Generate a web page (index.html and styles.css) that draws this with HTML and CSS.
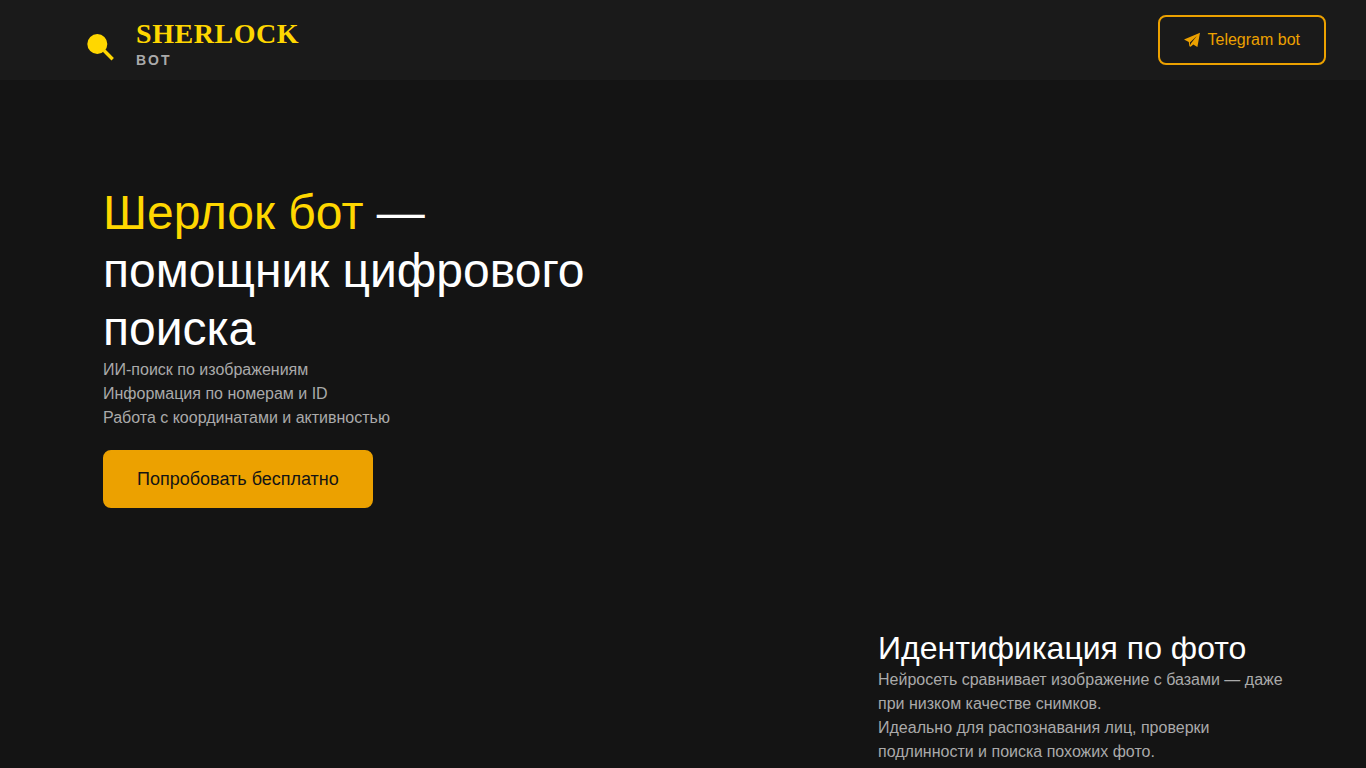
FILE: index.html
```html
<!DOCTYPE html>
<html lang="ru">
<head>
    <meta charset="UTF-8">
    <meta name="viewport" content="width=device-width, initial-scale=1.0">
    <title>Sherlock Bot</title>
    <link rel="stylesheet" href="styles.css">
</head>
<body>
    <header class="header">
        <a href="#" class="logo">
            <svg class="logo-icon" width="28" height="28" viewBox="0 0 28 28" aria-hidden="true">
                <circle cx="11.3" cy="11" r="10" fill="#ffd700"/>
                <path d="M18 17.5 L26.7 26.2" stroke="#ffd700" stroke-width="3.4"/>
            </svg>
            <span class="logo-text">
                <span class="logo-name">SHERLOCK</span>
                <span class="logo-sub">BOT</span>
            </span>
        </a>
        <a href="#" class="btn btn-outline">
            <svg width="16" height="16" viewBox="0 0 16 16" fill="currentColor" fill-rule="evenodd" aria-hidden="true">
                <path d="M0 7.4 L16 .8 L13.4 15 L9.3 12.4 L6.6 14.7 L5.4 14.3 L4.8 9.9 Z M5.9 10.4 L12.8 4 L7.1 11.3 L6.3 13.2 Z"/>
            </svg>
            Telegram bot
        </a>
    </header>

    <main>
        <section class="hero">
            <div class="hero-content">
                <h1><span class="accent">Шерлок бот</span> — помощник цифрового поиска</h1>
                <p>ИИ-поиск по изображениям<br>Информация по номерам и ID<br>Работа с координатами и активностью</p>
                <a href="#photo" class="btn btn-primary">Попробовать бесплатно</a>
            </div>
        </section>

        <section class="feature" id="photo">
            <div class="feature-text">
                <h2>Идентификация по фото</h2>
                <p>Нейросеть сравнивает изображение с базами — даже при низком качестве снимков.<br>Идеально для распознавания лиц, проверки подлинности и поиска похожих фото.</p>
            </div>
        </section>
    </main>
</body>
</html>
```
FILE: styles.css
```css
* {
    margin: 0;
    padding: 0;
    box-sizing: border-box;
}

body {
    font-family: "Liberation Sans", Arial, sans-serif;
    font-size: 16px;
    line-height: 24px;
    background-color: #141414;
    color: #aaa;
}

h1,
h2 {
    font-weight: 400;
    color: #fff;
}

h1 {
    font-size: 48px;
    line-height: 58px;
}

h2 {
    font-size: 32px;
    line-height: 40px;
}

.accent {
    color: #ffd700;
}

.header {
    display: flex;
    justify-content: space-between;
    align-items: center;
    height: 80px;
    padding: 0 40px 0 86px;
    background-color: #1a1a1a;
}

.logo {
    display: flex;
    align-items: center;
    gap: 22px;
    color: #aaa;
    text-decoration: none;
}

.logo-icon {
    margin-top: 14px;
}

.logo-text {
    display: flex;
    flex-direction: column;
    padding-top: 8px;
}

.logo-name {
    font-family: "Liberation Serif", "Times New Roman", serif;
    font-size: 28px;
    font-weight: 700;
    line-height: 32px;
    letter-spacing: 0.02em;
    color: #ffd700;
}

.logo-sub {
    font-size: 14px;
    font-weight: 700;
    line-height: 20px;
    letter-spacing: 2px;
}

.btn {
    display: inline-flex;
    align-items: center;
    gap: 8px;
    border: 2px solid #eca100;
    border-radius: 8px;
    text-decoration: none;
}

.btn-outline {
    padding: 11px 24px;
    color: #eca100;
}

.btn-primary {
    margin-top: 20px;
    padding: 15px 32px;
    font-size: 18px;
    background-color: #eca100;
    color: #141414;
}

.hero {
    max-width: 1200px;
    margin: 0 auto;
    padding: 104px 20px 120px;
}

.hero-content {
    max-width: 500px;
}

.feature {
    display: flex;
    justify-content: flex-end;
    max-width: 1240px;
    margin: 0 auto;
}

.feature-text {
    max-width: 425px;
}
```
